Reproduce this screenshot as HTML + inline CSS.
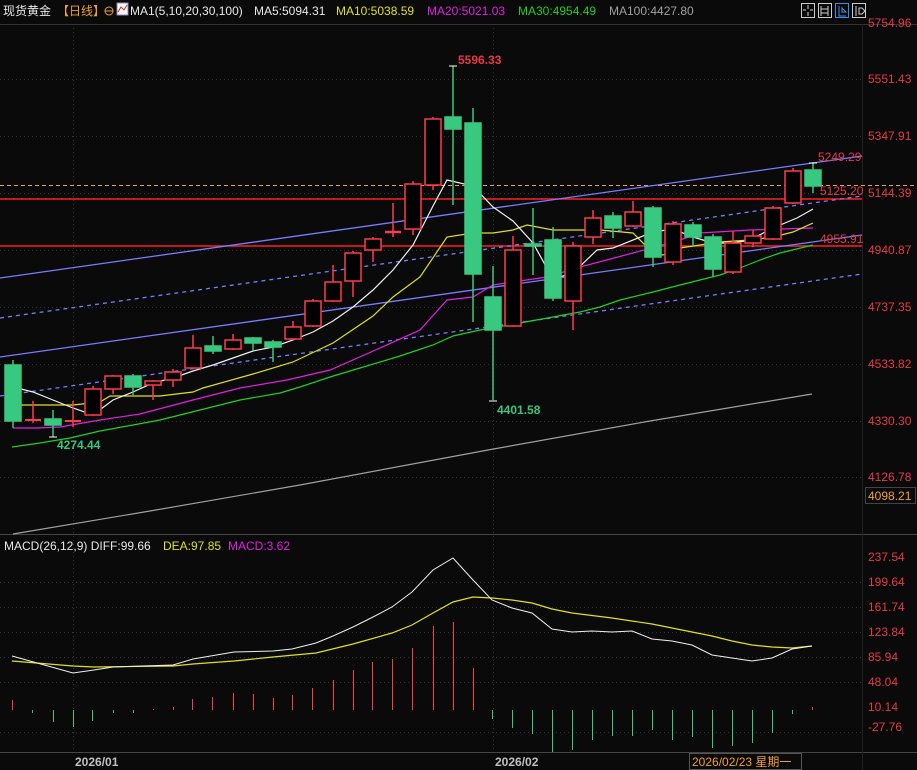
<!DOCTYPE html>
<html><head><meta charset="utf-8"><style>
html,body{margin:0;padding:0;background:#0a0a0a;width:917px;height:770px;overflow:hidden}
svg{display:block}
text{font-family:"Liberation Sans","Noto Sans CJK SC",sans-serif;font-size:12px}
</style></head><body>
<svg width="917" height="770" viewBox="0 0 917 770" xmlns="http://www.w3.org/2000/svg">
<rect width="917" height="770" fill="#0a0a0a"/>
<text x="3" y="15" fill="#e8e8e8" font-size="13">现货黄金</text>
<text x="57" y="15" fill="#f0a030" font-size="13">【日线】</text>
<circle cx="109" cy="11" r="4" fill="none" stroke="#f0a030" stroke-width="1"/><line x1="105" y1="11" x2="113" y2="11" stroke="#f0a030"/>
<rect x="117" y="3" width="11" height="12" fill="#fff" stroke="#88a" /><path d="M118 12 L121 7 L124 10 L127 5" stroke="#d02020" fill="none"/>
<text x="130" y="15" fill="#e8e8e8" font-size="13">MA1(5,10,20,30,100)</text>
<text x="254" y="15" fill="#e8e8e8" font-size="13">MA5:5094.31</text>
<text x="336" y="15" fill="#e0e020" font-size="13">MA10:5038.59</text>
<text x="427" y="15" fill="#e020e0" font-size="13">MA20:5021.03</text>
<text x="518" y="15" fill="#20d020" font-size="13">MA30:4954.49</text>
<text x="609" y="15" fill="#a0a0a0" font-size="13">MA100:4427.80</text>
<g fill="none" stroke="#ccc" stroke-width="1">
<rect x="801.5" y="3.5" width="13" height="14"/><path d="M808 5v4M808 12v4M803 10h3M810 10h3"/>
<rect x="818.5" y="3.5" width="13" height="14"/><path d="M821 6v10M828 6v10M821 9h7M821 13h7"/>
<rect x="835.5" y="3.5" width="13" height="14" stroke="#3a8ee8"/><path d="M839 6v10h7M842 8l4 4-4 0z" stroke="#3a8ee8"/>
<rect x="852.5" y="3.5" width="13" height="14"/><path d="M856 6v10M859 8h3l3 3-3 3h-3z"/>
</g>
<g stroke="#333" stroke-dasharray="1 3" stroke-width="1">
<line x1="0" y1="79.5" x2="862" y2="79.5"/><line x1="0" y1="136.5" x2="862" y2="136.5"/><line x1="0" y1="193.5" x2="862" y2="193.5"/><line x1="0" y1="250.5" x2="862" y2="250.5"/><line x1="0" y1="307.5" x2="862" y2="307.5"/><line x1="0" y1="364.5" x2="862" y2="364.5"/><line x1="0" y1="421.5" x2="862" y2="421.5"/><line x1="0" y1="477.5" x2="862" y2="477.5"/>
<line x1="0" y1="582.5" x2="862" y2="582.5"/><line x1="0" y1="607.5" x2="862" y2="607.5"/><line x1="0" y1="632.5" x2="862" y2="632.5"/><line x1="0" y1="657.5" x2="862" y2="657.5"/><line x1="0" y1="682.5" x2="862" y2="682.5"/><line x1="0" y1="732.5" x2="862" y2="732.5"/>
<line x1="493.5" y1="24" x2="493.5" y2="752"/><line x1="73.5" y1="24" x2="73.5" y2="752"/>
</g>
<line x1="0" y1="24.5" x2="917" y2="24.5" stroke="#333"/>
<line x1="0" y1="534.5" x2="917" y2="534.5" stroke="#444"/>
<line x1="0" y1="752.5" x2="917" y2="752.5" stroke="#444"/>
<line x1="862.5" y1="24" x2="862.5" y2="770" stroke="#222"/>
<g fill="#e83848" font-size="12">
<text x="868" y="27">5754.96</text><text x="868" y="83">5551.43</text><text x="868" y="140">5347.91</text><text x="868" y="197">5144.39</text><text x="868" y="254">4940.87</text><text x="868" y="311">4737.35</text><text x="868" y="368">4533.82</text><text x="868" y="425">4330.30</text><text x="868" y="481">4126.78</text>
<text x="868" y="561">237.54</text><text x="868" y="586">199.64</text><text x="868" y="611">161.74</text><text x="868" y="636">123.84</text><text x="868" y="661">85.94</text><text x="868" y="686">48.04</text><text x="868" y="711">10.14</text><text x="868" y="731">-27.76</text>
</g>
<rect x="865.5" y="487.5" width="50" height="16" fill="none" stroke="#444"/>
<text x="868" y="500" fill="#f0a030">4098.21</text>
<line x1="0" y1="185.5" x2="917" y2="185.5" stroke="#e8a040" stroke-dasharray="4 3"/>
<line x1="0" y1="199" x2="862" y2="199" stroke="#ff2020" stroke-width="1.5"/>
<line x1="0" y1="246" x2="862" y2="246" stroke="#ff2020" stroke-width="1.5"/>
<g stroke="#7b7bff" stroke-width="1.3" fill="none">
<line x1="0" y1="278" x2="862" y2="156"/>
<line x1="0" y1="357" x2="862" y2="235"/>
<line x1="0" y1="318" x2="862" y2="196" stroke-dasharray="4 4"/>
<line x1="0" y1="396" x2="862" y2="274" stroke-dasharray="4 4"/>
</g>
<g fill="none" stroke-width="1.2">
<polyline stroke="#a0a0a0" points="13,534 150,511 300,485 488,450 650,421 812,394"/>
<polyline stroke="#20d020" points="12,447 40,443 70,438 100,431 133,425 160,420 200,410 240,400 280,393 300,387 330,377 360,368 400,356 433,345 453,336 480,330 520,323 553,317 580,312 600,307 620,300 653,292 680,285 720,275 740,268 760,260 780,253 813,245"/>
<polyline stroke="#e020e0" points="13,428 37,428 60,427 100,420 140,414 193,400 240,388 287,380 330,370 380,348 420,330 447,300 473,297 493,285 547,277 580,267 633,253 680,240 700,233 750,230 813,228"/>
<polyline stroke="#e0e020" points="13,405 73,405 100,402 110,396 160,396 193,392 203,388 253,374 293,362 333,343 373,316 393,297 420,277 447,237 473,233 493,233 513,230 527,225 553,230 600,230 633,233 653,253 663,255 680,248 720,242 750,240 773,237 793,232 813,223"/>
<polyline stroke="#f0f0f0" points="13,387 33,392 53,400 73,408 93,415 113,400 133,392 153,383 173,378 193,371 213,365 233,358 253,351 273,347 293,340 313,332 333,321 353,307 373,290 393,270 413,245 433,206 447,180 473,186 493,207 513,221 533,243 553,279 573,273 597,250 613,248 653,232 673,229 693,237 713,243 733,243 750,240 773,228 797,218 813,209"/>
</g>
<g stroke="#ff3a4e" stroke-width="1.5" fill="#000">
<line x1="33" y1="401" x2="33" y2="423"/><line x1="25" y1="420" x2="41" y2="420" stroke-width="2"/>
<line x1="73" y1="401" x2="73" y2="427"/><line x1="65" y1="421" x2="81" y2="421" stroke-width="2"/>
<line x1="93" y1="386" x2="93" y2="416"/><rect x="85" y="389" width="16" height="26"/>
<line x1="113" y1="375" x2="113" y2="394"/><rect x="105" y="376" width="16" height="13"/>
<line x1="153" y1="380" x2="153" y2="400"/><rect x="145" y="381" width="16" height="4"/>
<line x1="173" y1="369" x2="173" y2="387"/><rect x="165" y="372" width="16" height="8"/>
<line x1="193" y1="335" x2="193" y2="369"/><rect x="185" y="348" width="16" height="20"/>
<line x1="233" y1="334" x2="233" y2="350"/><rect x="225" y="340" width="16" height="9"/>
<line x1="293" y1="321" x2="293" y2="340"/><rect x="285" y="327" width="16" height="12"/>
<line x1="313" y1="299" x2="313" y2="327"/><rect x="305" y="301" width="16" height="25"/>
<line x1="333" y1="265" x2="333" y2="302"/><rect x="325" y="282" width="16" height="19"/>
<line x1="353" y1="251" x2="353" y2="297"/><rect x="345" y="253" width="16" height="28"/>
<line x1="373" y1="237" x2="373" y2="262"/><rect x="365" y="239" width="16" height="11"/>
<line x1="393" y1="203" x2="393" y2="237"/><line x1="385" y1="232" x2="401" y2="232" stroke-width="2.5"/>
<line x1="413" y1="181" x2="413" y2="235"/><rect x="405" y="184" width="16" height="45"/>
<line x1="433" y1="117" x2="433" y2="190"/><rect x="425" y="119" width="16" height="66"/>
<line x1="513" y1="236" x2="513" y2="327"/><rect x="505" y="250" width="16" height="76"/>
<line x1="573" y1="242" x2="573" y2="330"/><rect x="565" y="246" width="16" height="55"/>
<line x1="593" y1="210" x2="593" y2="244"/><rect x="585" y="218" width="16" height="19"/>
<line x1="633" y1="201" x2="633" y2="227"/><rect x="625" y="212" width="16" height="14"/>
<line x1="673" y1="221" x2="673" y2="265"/><rect x="665" y="224" width="16" height="38"/>
<line x1="733" y1="231" x2="733" y2="274"/><rect x="725" y="243" width="16" height="29"/>
<line x1="753" y1="230" x2="753" y2="247"/><rect x="745" y="236" width="16" height="7"/>
<line x1="773" y1="206" x2="773" y2="240"/><rect x="765" y="208" width="16" height="31"/>
<line x1="793" y1="168" x2="793" y2="204"/><rect x="785" y="171" width="16" height="32"/>
</g>
<g stroke="#38c880" stroke-width="1.5" fill="#38c880">
<line x1="13" y1="360" x2="13" y2="428"/><rect x="5" y="365" width="16" height="56"/>
<line x1="53" y1="410" x2="53" y2="437"/><rect x="45" y="419" width="16" height="6"/>
<line x1="133" y1="374" x2="133" y2="395"/><rect x="125" y="376" width="16" height="11"/>
<line x1="213" y1="336" x2="213" y2="354"/><rect x="205" y="346" width="16" height="5"/>
<line x1="253" y1="337" x2="253" y2="351"/><rect x="245" y="338" width="16" height="5"/>
<line x1="273" y1="340" x2="273" y2="362"/><rect x="265" y="342" width="16" height="5"/>
<line x1="453" y1="66" x2="453" y2="205"/><rect x="445" y="117" width="16" height="12"/>
<line x1="473" y1="108" x2="473" y2="322"/><rect x="465" y="123" width="16" height="151"/>
<line x1="493" y1="266" x2="493" y2="400"/><rect x="485" y="297" width="16" height="33"/>
<line x1="533" y1="208" x2="533" y2="275"/><rect x="525" y="244" width="16" height="2"/>
<line x1="553" y1="227" x2="553" y2="301"/><rect x="545" y="240" width="16" height="58"/>
<line x1="613" y1="212" x2="613" y2="238"/><rect x="605" y="216" width="16" height="12"/>
<line x1="653" y1="206" x2="653" y2="267"/><rect x="645" y="208" width="16" height="49"/>
<line x1="693" y1="222" x2="693" y2="246"/><rect x="685" y="225" width="16" height="12"/>
<line x1="713" y1="234" x2="713" y2="277"/><rect x="705" y="237" width="16" height="32"/>
<line x1="813" y1="162" x2="813" y2="193"/><rect x="805" y="170" width="16" height="16"/>
</g>
<g stroke="#fff" stroke-width="1"><path d="M449 66h8M53 437h-4M49 437h8M489 401h8M809 163h8"/></g>
<text x="458" y="64" fill="#e83848" font-size="12" font-weight="bold">5596.33</text>
<text x="497" y="414" fill="#3ac47d" font-size="12" font-weight="bold">4401.58</text>
<text x="57" y="449" fill="#3ac47d" font-size="12" font-weight="bold">4274.44</text>
<text x="818" y="161" fill="#e83848" font-size="12">5249.29</text>
<text x="820" y="195" fill="#e83848" font-size="12">5125.20</text>
<text x="820" y="243" fill="#e83848" font-size="12">4955.91</text>
<text x="4" y="550" fill="#e8e8e8">MACD(26,12,9) DIFF:99.66</text>
<text x="163" y="550" fill="#e0e020">DEA:97.85</text>
<text x="228" y="550" fill="#e020e0">MACD:3.62</text>
<g stroke="#ff3a4e" stroke-width="1">
<path d="M12.5 710V700M153.5 710V709M173.5 710V707M192.5 710V699M212.5 710V697M233.5 710V693M253.5 710V694M273.5 710V698M292.5 710V695M312.5 710V688M333.5 710V680M353.5 710V670M372.5 710V662M392.5 710V659M412.5 710V648M433.5 710V626M453.5 710V622M473.5 710V668M812.5 710V707"/>
</g>
<g stroke="#38c880" stroke-width="1">
<path d="M32.5 710V713M53.5 710V722M73.5 710V727M92.5 710V721M113.5 710V713M133.5 710V713M492.5 710V719M512.5 710V728M532.5 710V734M552.5 710V752M572.5 710V750M592.5 710V740M612.5 710V736M632.5 710V736M652.5 710V730M672.5 710V740M692.5 710V737M712.5 710V748M732.5 710V746M752.5 710V743M772.5 710V733M792.5 710V714"/>
</g>
<polyline fill="none" stroke="#e0e020" stroke-width="1.2" points="12,661 73,666 94,667 173,666 193,664 234,661 273,657 316,653 353,644 392,633 412,625 433,613 453,602 473,597 492,598 512,600 532,603 552,609 572,613 612,618 652,624 672,628 692,632 712,636 732,641 752,645 772,647 792,648 812,646"/>
<polyline fill="none" stroke="#f0f0f0" stroke-width="1" points="12,656 73,673 94,670 113,667 173,665 193,659 234,652 273,651 292,649 316,643 333,636 353,627 373,617 392,607 412,592 433,570 453,558 473,580 492,600 512,608 532,613 552,629 572,632 592,631 612,632 632,631 652,639 672,641 692,645 712,655 732,658 752,661 772,658 792,649 812,646"/>
<text x="75" y="766" fill="#c0c0c0" font-weight="bold">2026/01</text>
<text x="495" y="766" fill="#c0c0c0" font-weight="bold">2026/02</text>
<rect x="689.5" y="753.5" width="112" height="16" fill="#0a0a0a" stroke="#555"/>
<text x="692" y="766" fill="#f0a030">2026/02/23 星期一</text>
</svg>
</body></html>
